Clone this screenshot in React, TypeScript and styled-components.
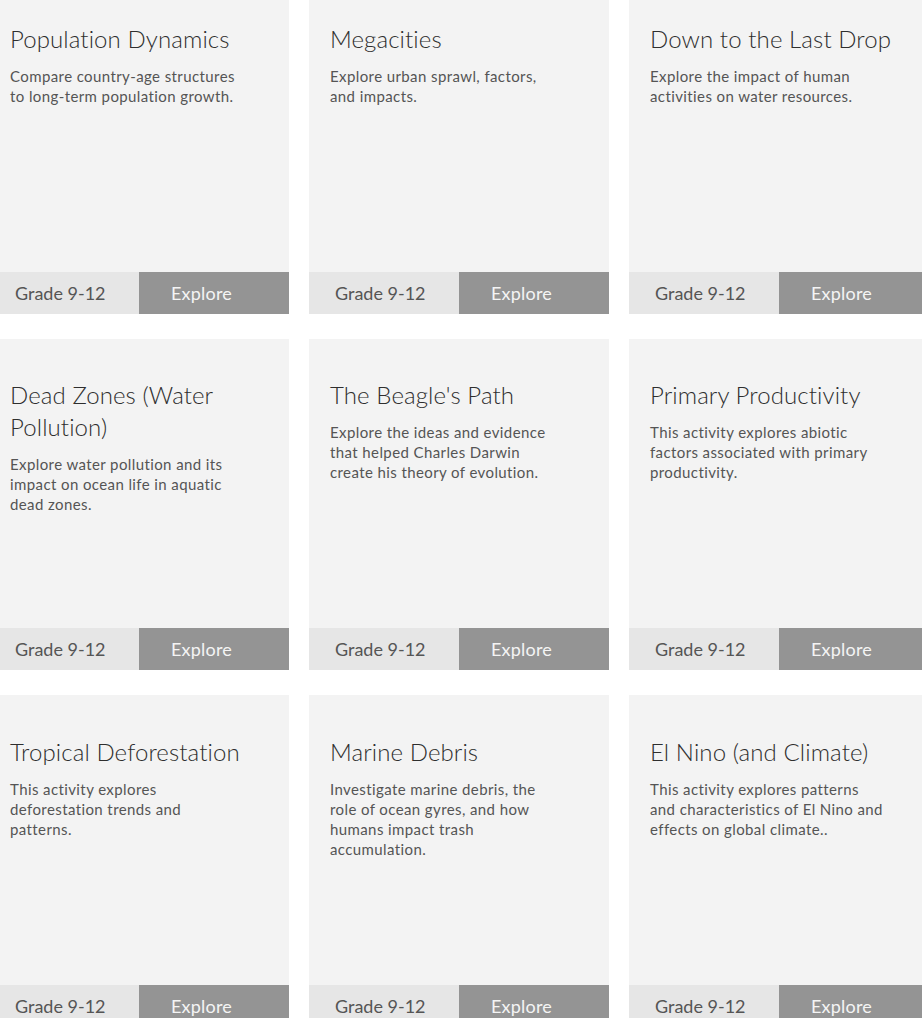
import React from "react";
import styled, { createGlobalStyle } from "styled-components";

const Global = createGlobalStyle`
  html, body { margin: 0; padding: 0; background: #ffffff; overflow: hidden; }
  body { font-family: Lato, "Noto Sans", "DejaVu Sans", sans-serif; }
`;

const Grid = styled.div`
  display: grid;
  grid-template-columns: repeat(3, 300px);
  column-gap: 20px;
  row-gap: 25px;
  margin: -18px 0 0 -11px;
`;

const Card = styled.div`
  display: flex;
  flex-direction: column;
  height: 331.5px;
  background: #f3f3f3;
`;

const Body = styled.div`
  flex: 1;
  padding: 40.5px 21px 0;
`;

const Title = styled.h2`
  margin: 0;
  font-size: 24px;
  line-height: 32px;
  font-weight: 300;
  letter-spacing: 0.1px;
  color: #2e2e2e;
`;

const Desc = styled.p`
  margin: 11px 0 0;
  font-size: 15px;
  line-height: 20px;
  font-weight: 400;
  letter-spacing: 0.4px;
  color: #555555;
`;

const Line = styled.span`
  display: block;
  white-space: nowrap;
`;

const Footer = styled.div`
  display: grid;
  grid-template-columns: 150px 150px;
  height: 42px;
`;

const Grade = styled.div`
  display: flex;
  align-items: center;
  padding-left: 26px;
  background: #e6e6e6;
  color: #555555;
  font-size: 18px;
  font-weight: 400;
`;

const Explore = styled.div`
  display: flex;
  align-items: center;
  padding-left: 32px;
  background: #949494;
  color: #f4f4f4;
  font-size: 18px;
  font-weight: 400;
  letter-spacing: 0.2px;
`;

type Item = { title: string[]; desc: string[] };

const items: Item[] = [
  { title: ["Population Dynamics"], desc: ["Compare country-age structures", "to long-term population growth."] },
  { title: ["Megacities"], desc: ["Explore urban sprawl, factors,", "and impacts."] },
  { title: ["Down to the Last Drop"], desc: ["Explore the impact of human", "activities on water resources."] },
  { title: ["Dead Zones (Water", "Pollution)"], desc: ["Explore water pollution and its", "impact on ocean life in aquatic", "dead zones."] },
  { title: ["The Beagle's Path"], desc: ["Explore the ideas and evidence", "that helped Charles Darwin", "create his theory of evolution."] },
  { title: ["Primary Productivity"], desc: ["This activity explores abiotic", "factors associated with primary", "productivity."] },
  { title: ["Tropical Deforestation"], desc: ["This activity explores", "deforestation trends and", "patterns."] },
  { title: ["Marine Debris"], desc: ["Investigate marine debris, the", "role of ocean gyres, and how", "humans impact trash", "accumulation."] },
  { title: ["El Nino (and Climate)"], desc: ["This activity explores patterns", "and characteristics of El Nino and", "effects on global climate.."] },
];

export default function App() {
  return (
    <>
      <Global />
      <Grid>
        {items.map((it, i) => (
          <Card key={i}>
            <Body>
              <Title>
                {it.title.map((t, j) => (
                  <Line key={j}>{t}</Line>
                ))}
              </Title>
              <Desc>
                {it.desc.map((d, j) => (
                  <Line key={j}>{d}</Line>
                ))}
              </Desc>
            </Body>
            <Footer>
              <Grade>Grade 9-12</Grade>
              <Explore>Explore</Explore>
            </Footer>
          </Card>
        ))}
      </Grid>
    </>
  );
}
